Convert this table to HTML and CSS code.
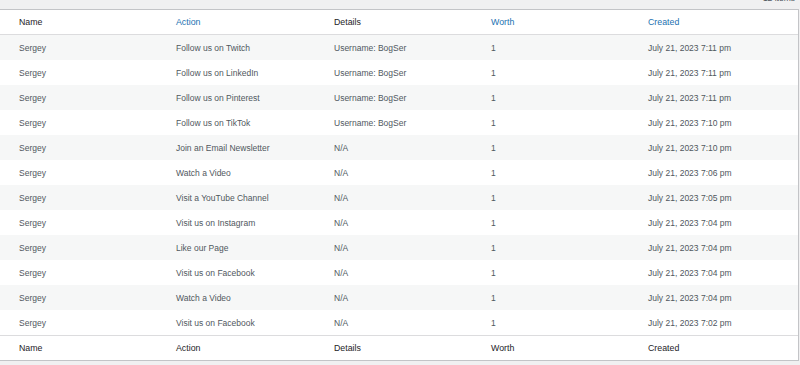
FILE: index.html
```html
<!DOCTYPE html>
<html>
<head>
<meta charset="utf-8">
<link rel="stylesheet" href="styles.css">
</head>
<body>
<div class="tablenav"><span class="count">12 items</span></div>
<table class="list">
  <colgroup>
    <col class="c1"><col class="c2"><col class="c3"><col class="c4"><col class="c5">
  </colgroup>
  <thead>
    <tr>
      <th class="first">Name</th>
      <th class="sortable">Action</th>
      <th>Details</th>
      <th class="sortable">Worth</th>
      <th class="sortable">Created</th>
    </tr>
  </thead>
  <tbody>
    <tr class="alt"><td class="first">Sergey</td><td>Follow us on Twitch</td><td>Username: BogSer</td><td>1</td><td>July 21, 2023 7:11 pm</td></tr>
    <tr><td class="first">Sergey</td><td>Follow us on LinkedIn</td><td>Username: BogSer</td><td>1</td><td>July 21, 2023 7:11 pm</td></tr>
    <tr class="alt"><td class="first">Sergey</td><td>Follow us on Pinterest</td><td>Username: BogSer</td><td>1</td><td>July 21, 2023 7:11 pm</td></tr>
    <tr><td class="first">Sergey</td><td>Follow us on TikTok</td><td>Username: BogSer</td><td>1</td><td>July 21, 2023 7:10 pm</td></tr>
    <tr class="alt"><td class="first">Sergey</td><td>Join an Email Newsletter</td><td>N/A</td><td>1</td><td>July 21, 2023 7:10 pm</td></tr>
    <tr><td class="first">Sergey</td><td>Watch a Video</td><td>N/A</td><td>1</td><td>July 21, 2023 7:06 pm</td></tr>
    <tr class="alt"><td class="first">Sergey</td><td>Visit a YouTube Channel</td><td>N/A</td><td>1</td><td>July 21, 2023 7:05 pm</td></tr>
    <tr><td class="first">Sergey</td><td>Visit us on Instagram</td><td>N/A</td><td>1</td><td>July 21, 2023 7:04 pm</td></tr>
    <tr class="alt"><td class="first">Sergey</td><td>Like our Page</td><td>N/A</td><td>1</td><td>July 21, 2023 7:04 pm</td></tr>
    <tr><td class="first">Sergey</td><td>Visit us on Facebook</td><td>N/A</td><td>1</td><td>July 21, 2023 7:04 pm</td></tr>
    <tr class="alt"><td class="first">Sergey</td><td>Watch a Video</td><td>N/A</td><td>1</td><td>July 21, 2023 7:04 pm</td></tr>
    <tr><td class="first">Sergey</td><td>Visit us on Facebook</td><td>N/A</td><td>1</td><td>July 21, 2023 7:02 pm</td></tr>
  </tbody>
  <tfoot>
    <tr>
      <th class="first">Name</th>
      <th>Action</th>
      <th>Details</th>
      <th>Worth</th>
      <th>Created</th>
    </tr>
  </tfoot>
</table>
</body>
</html>
```
FILE: styles.css
```css
html, body {
  margin: 0;
  padding: 0;
  background: #f0f0f1;
  font-family: "Liberation Sans", Arial, sans-serif;
  font-size: 8.5px;
  color: #50575e;
  overflow: hidden;
}

.tablenav {
  height: 9px;
  position: relative;
  overflow: hidden;
}

.count {
  position: absolute;
  right: 5px;
  top: -6px;
  line-height: 9px;
  color: #50575e;
}

.list {
  margin-left: -1px;
  width: 800px;
  table-layout: fixed;
  border-collapse: separate;
  border-spacing: 0;
  background: #fff;
  border: 1px solid #c3c4c7;
}

.c1 { width: 166px; }
.c2 { width: 158px; }
.c3 { width: 157px; }
.c4 { width: 157px; }

th, td {
  text-align: left;
  padding: 0 10px;
  white-space: nowrap;
  vertical-align: middle;
}

th {
  height: 24px;
  font-weight: 400;
  color: #1d2327;
  font-size: 8.8px;
}

thead th {
  border-bottom: 1px solid #dcdcde;
}

tfoot th {
  border-top: 1px solid #dcdcde;
}

th.sortable {
  color: #2271b1;
}

td {
  height: 25px;
}

.first {
  padding-left: 19px;
}

tr.alt td {
  background: #f6f7f7;
}
```
